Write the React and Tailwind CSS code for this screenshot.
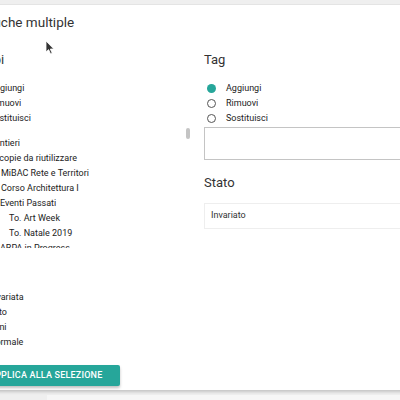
import React from 'react';

const groupItems = [
  { label: 'Cantieri', pl: 'pl-[22px]' },
  { label: 'Scopie da riutilizzare', pl: 'pl-[27px]' },
  { label: 'MiBAC Rete e Territori', pl: 'pl-[34px]' },
  { label: 'Corso Architettura I', pl: 'pl-[34px]' },
  { label: 'Eventi Passati', pl: 'pl-[33px]' },
  { label: 'To. Art Week', pl: 'pl-[42px]' },
  { label: 'To. Natale 2019', pl: 'pl-[42px]' },
  { label: 'ARPA in Progress', pl: 'pl-[33px]' },
  { label: 'Archivio', pl: 'pl-[33px]' },
];

function Radio({ label, checked }) {
  return (
    <label className="flex items-center h-[15px] text-[9px] leading-[15px] text-[#222]">
      {checked ? (
        <span className="ml-[3px] w-[9px] h-[9px] rounded-full bg-[#26a69a] shrink-0" />
      ) : (
        <span className="ml-[3px] w-[9px] h-[9px] rounded-full border-[1.5px] border-[#555] shrink-0" />
      )}
      <span className="ml-[10px] whitespace-nowrap">{label}</span>
    </label>
  );
}

function Heading({ children, className = '' }) {
  return (
    <h3 className={`text-[13px] leading-[16px] text-[#333] font-normal whitespace-nowrap ${className}`}>
      {children}
    </h3>
  );
}

export default function App() {
  return (
    <div
      className="relative w-[400px] h-[400px] overflow-hidden bg-[#efefef]"
      style={{ fontFamily: 'Roboto, "Noto Sans", sans-serif' }}
    >
      {/* top strip */}
      <div className="h-[5px] border-b border-[#e6e6e6]" />

      {/* modal */}
      <div className="h-[385px] w-[520px] ml-[-70px] pl-[37px] bg-white shadow-[0_2px_3px_rgba(0,0,0,0.18)]">
        <h2 className="pt-[9px] ml-[-4px] text-[13.5px] leading-[16px] text-[#333] whitespace-nowrap">
          Modifiche multiple
        </h2>

        <div className="flex mt-[22px]">
          {/* left column */}
          <div className="w-[224px] shrink-0">
            <Heading className="ml-[-1px]">Gruppi</Heading>
            <div className="mt-[13px]">
              <Radio label="Aggiungi" checked />
              <Radio label="Rimuovi" />
              <Radio label="Sostituisci" />
            </div>

            <div className="relative mt-[1px] h-[121px] overflow-hidden pt-[9px]">
              {groupItems.map((it) => (
                <div
                  key={it.label}
                  className={`h-[15px] text-[9px] leading-[15px] text-[#222] whitespace-nowrap ${it.pl}`}
                >
                  {it.label}
                </div>
              ))}
              <div className="absolute right-[1px] top-[1px] w-[4px] h-[11px] rounded-full bg-[#c4c4c4]" />
            </div>

            <Heading className="mt-[16px] ml-[-1px]">Tipo</Heading>
            <div className="mt-[9.5px]">
              <Radio label="Invariata" />
              <Radio label="Foto" />
              <Radio label="Beni" />
              <Radio label="Normale" />
            </div>

            <button className="mt-[15.5px] ml-[5px] h-[21px] pl-[17px] pr-[18px] bg-[#26a69a] text-white text-[9px] font-medium tracking-[0.2px] uppercase rounded-[2px] shadow-[0_2px_3px_rgba(0,0,0,0.25)] whitespace-nowrap">
              Applica alla selezione
            </button>
          </div>

          {/* right column */}
          <div className="ml-[13px] w-[240px] shrink-0">
            <Heading>Tag</Heading>
            <div className="mt-[13px]">
              <Radio label="Aggiungi" checked />
              <Radio label="Rimuovi" />
              <Radio label="Sostituisci" />
            </div>
            <div className="mt-[1px] h-[33px] border border-[#c4c4c4] bg-white" />

            <Heading className="mt-[15px]">Stato</Heading>
            <div className="mt-[12px] h-[26px] border border-[#eeeeee] flex items-center pl-[6px] text-[9px] text-[#333]">
              Invariato
            </div>
          </div>
        </div>
      </div>

      {/* backdrop below */}
      <div className="ml-[47px] mt-[5px] h-[10px] bg-[#f6f6f6]" />

      {/* mouse pointer */}
      <svg
        className="absolute left-[45px] top-[40px]"
        width="10"
        height="15"
        viewBox="0 0 10 15"
      >
        <path d="M1 1 L1 12 L3.6 9.6 L5.6 14 L7.2 13.3 L5.3 9 L8.8 9 Z" fill="#333" stroke="#fff" strokeWidth="0.8" />
      </svg>
    </div>
  );
}
